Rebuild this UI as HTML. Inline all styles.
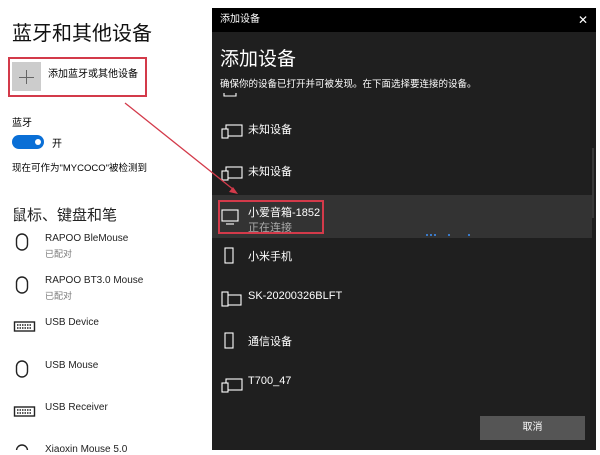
<!DOCTYPE html>
<html><head><meta charset="utf-8"><style>
*{margin:0;padding:0;box-sizing:border-box}
body{width:600px;height:450px;background:#fff;position:relative;overflow:hidden;font-family:"Liberation Sans","Noto Sans CJK SC",sans-serif;color:#000}
.a{position:absolute;white-space:nowrap}
.dlg{position:absolute;left:212px;top:8px;width:384px;height:442px;background:#1f1f1f;color:#fff}
.tb{position:absolute;left:0;top:0;width:384px;height:24px;background:#000;font-size:10px;line-height:24px;padding-left:8px}
.di{position:absolute;left:8px;color:#fff;font-size:11px}
svg{position:absolute}
</style></head><body>
<div class="a" style="left:12px;top:17px;font-size:20px;color:#111">蓝牙和其他设备</div>
<div class="a" style="left:8px;top:57px;width:139px;height:40px;border:2px solid #d33a4a"></div>
<div class="a" style="left:12px;top:62px;width:29px;height:29px;background:#ccc"></div>
<svg width="20" height="20" style="left:17px;top:67px" stroke="#666" stroke-width="1"><line x1="9.5" y1="3" x2="9.5" y2="17"/><line x1="2" y1="10.5" x2="17" y2="10.5"/></svg>
<div class="a" style="left:48px;top:65px;font-size:10px">添加蓝牙或其他设备</div>
<div class="a" style="left:12px;top:114px;font-size:10px">蓝牙</div>
<div class="a" style="left:12px;top:135px;width:32px;height:14px;background:#0a6fd6;border-radius:7px"></div>
<div class="a" style="left:35px;top:139px;width:6px;height:6px;background:#fff;border-radius:3px"></div>
<div class="a" style="left:52px;top:135px;font-size:10px">开</div>
<div class="a" style="left:12px;top:160px;font-size:9.5px">现在可作为"MYCOCO"被检测到</div>
<div class="a" style="left:12px;top:204px;font-size:15px;color:#222">鼠标、键盘和笔</div>

<div class="a" style="left:45px;top:233px;font-size:10px;color:#222">RAPOO BleMouse</div>
<div class="a" style="left:45px;top:247px;font-size:9px;color:#777">已配对</div>
<div class="a" style="left:45px;top:275px;font-size:10px;color:#222">RAPOO BT3.0 Mouse</div>
<div class="a" style="left:45px;top:289px;font-size:9px;color:#777">已配对</div>
<div class="a" style="left:45px;top:317px;font-size:10px;color:#222">USB Device</div>
<div class="a" style="left:45px;top:360px;font-size:10px;color:#222">USB Mouse</div>
<div class="a" style="left:45px;top:402px;font-size:10px;color:#222">USB Receiver</div>
<div class="a" style="left:45px;top:444px;font-size:10px;color:#222">Xiaoxin Mouse 5.0</div>
<svg width="40" height="450" style="left:0;top:0" fill="none" stroke="#222" stroke-width="1.4">
<rect x="16.5" y="234" width="11" height="16" rx="5.5"/>
<rect x="16.5" y="277" width="11" height="16" rx="5.5"/>
<rect x="16.5" y="361" width="11" height="16" rx="5.5"/>
<rect x="14.5" y="322" width="20" height="9"/><line x1="17" y1="325" x2="32" y2="325" stroke-dasharray="1.5 1"/><line x1="17" y1="328" x2="32" y2="328" stroke-dasharray="1.5 1"/>
<rect x="14.5" y="407" width="20" height="9"/><line x1="17" y1="410" x2="32" y2="410" stroke-dasharray="1.5 1"/><line x1="17" y1="413" x2="32" y2="413" stroke-dasharray="1.5 1"/>
<rect x="16.5" y="445" width="11" height="16" rx="5.5"/>
</svg>

<div class="dlg">
<div class="tb">添加设备<span style="position:absolute;right:8px;font-size:12px">✕</span></div>
<div class="di" style="top:36px;font-size:19px">添加设备</div>
<div class="di" style="top:68px;font-size:9.5px">确保你的设备已打开并可被发现。在下面选择要连接的设备。</div>
<div style="position:absolute;left:0;top:187px;width:380px;height:43px;background:#333"></div>
<div style="position:absolute;left:6px;top:192px;width:106px;height:34px;border:2px solid #d33a4a"></div>
<div class="di" style="left:36px;top:113px">未知设备</div>
<div class="di" style="left:36px;top:155px">未知设备</div>
<div class="di" style="left:36px;top:196px">小爱音箱-1852</div>
<div class="di" style="left:36px;top:211px;color:#aaa">正在连接</div>
<div class="di" style="left:36px;top:240px">小米手机</div>
<div class="di" style="left:36px;top:282px">SK-20200326BLFT</div>
<div class="di" style="left:36px;top:325px">通信设备</div>
<div class="di" style="left:36px;top:367px">T700_47</div>
<div style="position:absolute;left:268px;top:408px;width:105px;height:24px;background:#555;font-size:10px;text-align:center;line-height:24px">取消</div>
<svg width="80" height="6" style="left:212px;top:224px" fill="#3b7ac8"><rect x="2" y="2" width="2" height="2"/><rect x="6" y="2" width="2" height="2"/><rect x="10" y="2" width="2" height="2"/><rect x="24" y="2" width="2" height="2"/><rect x="44" y="2" width="2" height="2"/></svg>
<div style="position:absolute;left:380px;top:140px;width:2px;height:70px;background:#3a3a3a"></div>
</div>
<svg width="384" height="442" style="left:212px;top:8px" fill="none" stroke="#fff" stroke-width="1.1">
<path d="M12 85v3h12v-3"/>
<rect x="14" y="117" width="16" height="11"/><rect x="10" y="121" width="6" height="9" fill="#1f1f1f"/>
<rect x="14" y="159" width="16" height="11"/><rect x="10" y="163" width="6" height="9" fill="#1f1f1f"/>
<rect x="10" y="202" width="16" height="11"/><line x1="14" y1="216" x2="22" y2="216"/>
<rect x="13" y="240" width="8" height="15"/>
<rect x="15" y="287" width="14" height="10"/><rect x="10" y="284" width="6" height="14" fill="#1f1f1f"/>
<rect x="13" y="325" width="8" height="15"/>
<rect x="14" y="371" width="16" height="11"/><rect x="10" y="375" width="6" height="9" fill="#1f1f1f"/>
</svg>
<svg width="600" height="450" style="left:0;top:0">
<line x1="125" y1="103" x2="234" y2="190" stroke="#d33a4a" stroke-width="1.3"/>
<path d="M238 194l-9-2 4-5z" fill="#d33a4a"/>
</svg>
</body></html>
